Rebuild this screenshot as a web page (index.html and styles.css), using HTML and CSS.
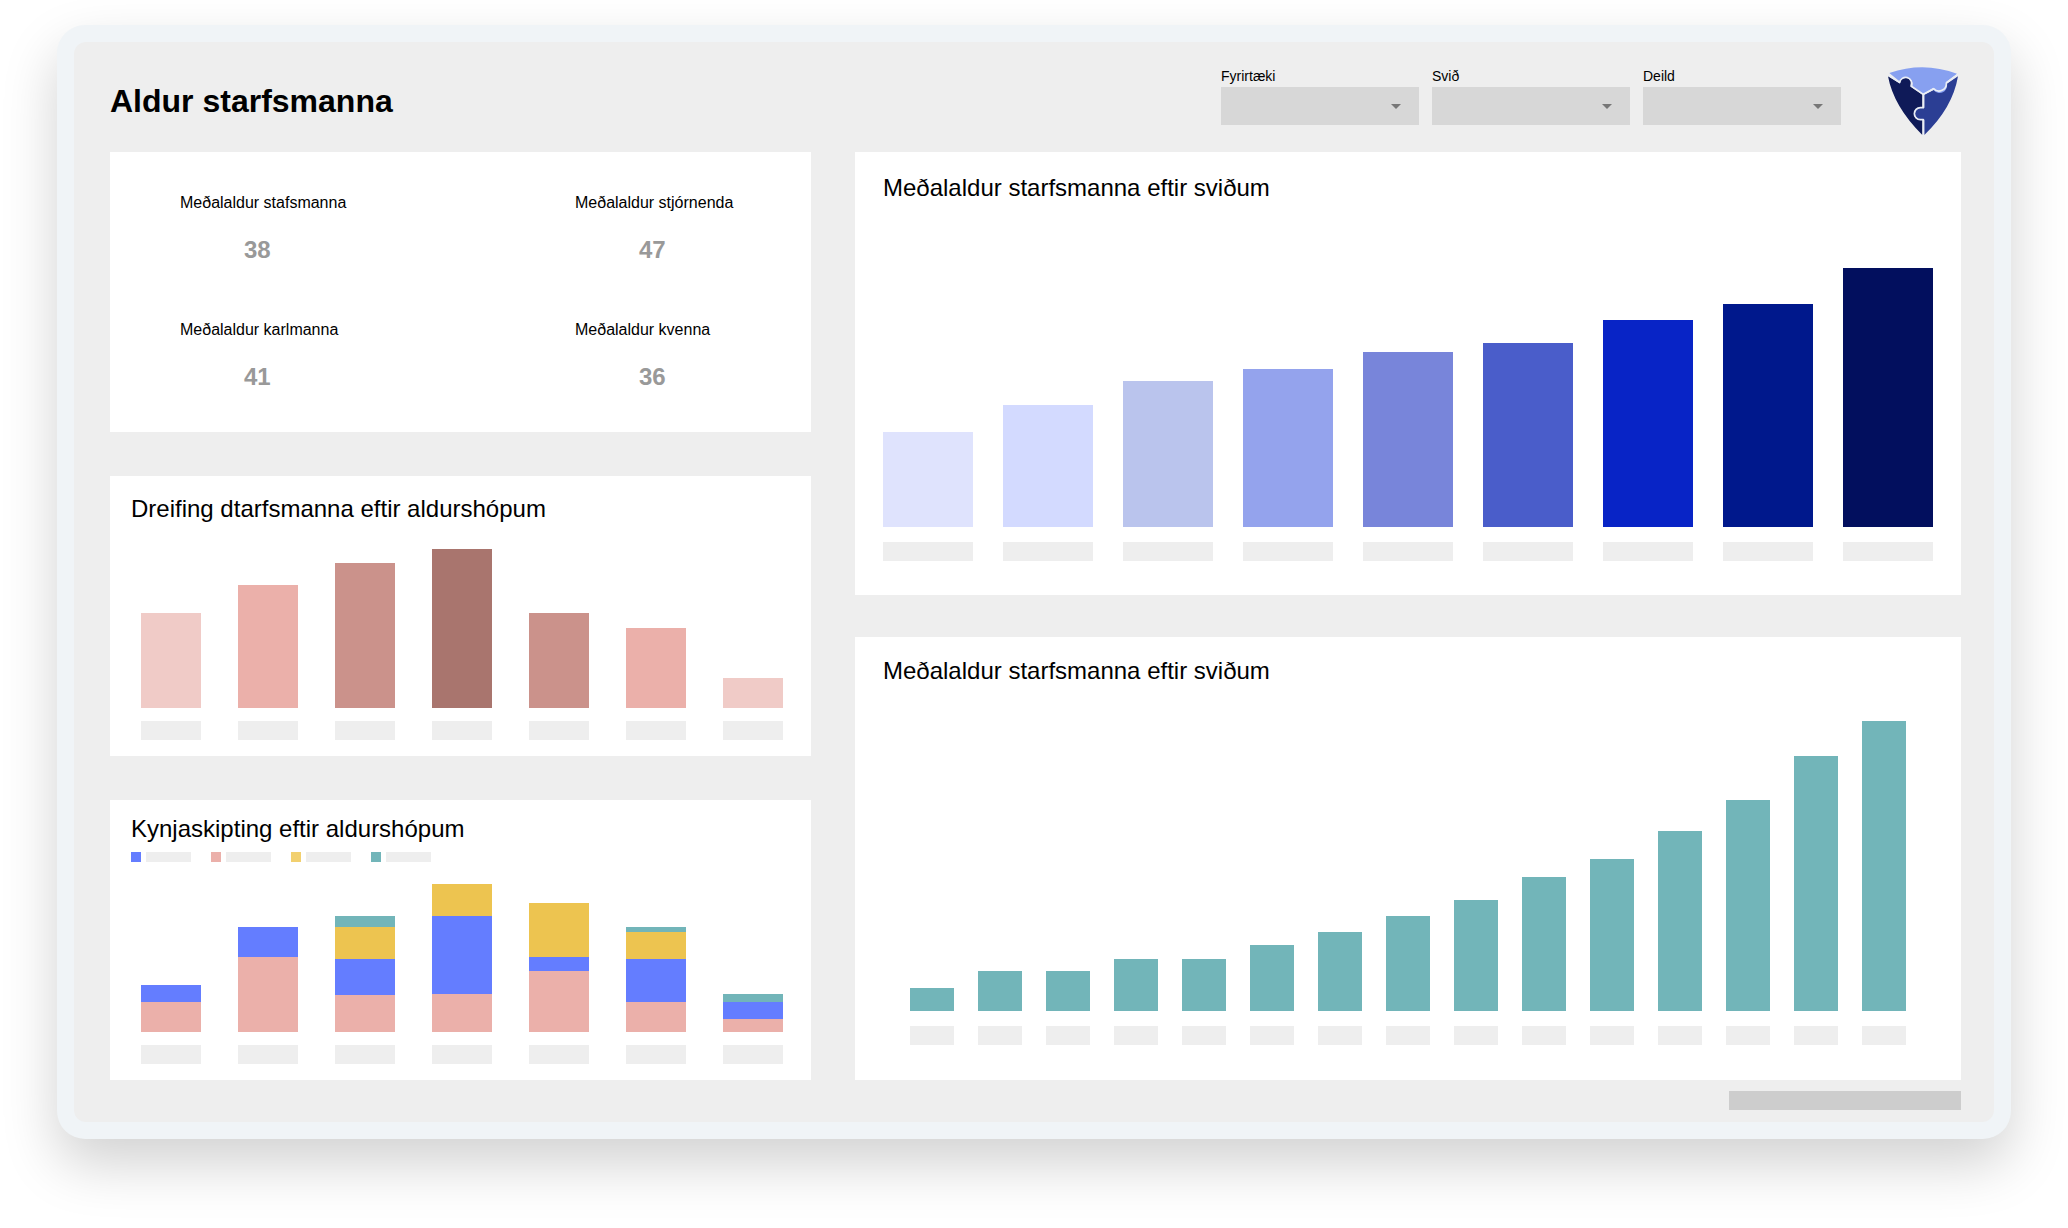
FILE: index.html
```html
<!DOCTYPE html>
<html lang="is">
<head>
<meta charset="utf-8">
<title>Aldur starfsmanna</title>
<link rel="stylesheet" href="styles.css">
</head>
<body>
<div class="frame">
  <div class="board">
    <header class="header">
      <h1 class="page-title">Aldur starfsmanna</h1>
      <div class="filters">
        <div class="filter"><div class="filter-label">Fyrirtæki</div><div class="select"><span class="caret"></span></div></div>
        <div class="filter"><div class="filter-label">Svið</div><div class="select"><span class="caret"></span></div></div>
        <div class="filter"><div class="filter-label">Deild</div><div class="select"><span class="caret"></span></div></div>
      </div>
      <svg class="logo" viewBox="30 0 228 240" width="76" height="80" aria-hidden="true">
        <path fill="#87a0f0" d="M43 39 Q145 3 246 41 L213 66 A22 22 0 1 1 174 84 L145 102 L112 80 A18 18 0 1 0 76 66 Z"/>
        <path fill="#0f1a58" d="M39 49 L74 70 A18 18 0 1 1 108 80 L142 104 L142 143 L135 143 A18 18 0 1 0 135 179 L142 179 L142 225 Q56 140 39 49 Z"/>
        <path fill="#2b3e94" d="M148 225 L148 179 L138 179 A18 18 0 1 1 138 143 L148 143 L148 104 L176 90 A22 22 0 0 0 215 71 L249 49 Q233 144 148 225 Z"/>
        <path class="logo-seam" d="M40 46 L74 68 A18 18 0 1 1 108 78 L145 103 L145 143 L136 143 A18 18 0 1 0 136 179 L145 179 L145 226 M145 103 L176 86 A22 22 0 0 0 214 69 L248 44"/>
      </svg>
    </header>
    <main class="main">
      <div class="column-left">
        <section class="card kpis">
          <div class="kpi"><div class="kpi-label">Meðalaldur stafsmanna</div><div class="kpi-value">38</div></div>
          <div class="kpi"><div class="kpi-label">Meðalaldur stjórnenda</div><div class="kpi-value">47</div></div>
          <div class="kpi"><div class="kpi-label">Meðalaldur karlmanna</div><div class="kpi-value">41</div></div>
          <div class="kpi"><div class="kpi-label">Meðalaldur kvenna</div><div class="kpi-value">36</div></div>
        </section>
        <section class="card card-dist">
          <h2 class="card-title">Dreifing dtarfsmanna eftir aldurshópum</h2>
          <div class="chart chart-small">
            <div class="col"><div class="bar rose-1" style="height:95px"></div><div class="tick"></div></div>
            <div class="col"><div class="bar rose-2" style="height:123px"></div><div class="tick"></div></div>
            <div class="col"><div class="bar rose-3" style="height:145px"></div><div class="tick"></div></div>
            <div class="col"><div class="bar rose-4" style="height:159px"></div><div class="tick"></div></div>
            <div class="col"><div class="bar rose-3" style="height:95px"></div><div class="tick"></div></div>
            <div class="col"><div class="bar rose-2" style="height:80px"></div><div class="tick"></div></div>
            <div class="col"><div class="bar rose-1" style="height:30px"></div><div class="tick"></div></div>
          </div>
        </section>
        <section class="card card-stack">
          <h2 class="card-title">Kynjaskipting eftir aldurshópum</h2>
          <div class="legend">
            <div class="legend-item"><span class="swatch blue"></span><span class="legend-text"></span></div>
            <div class="legend-item"><span class="swatch pink"></span><span class="legend-text"></span></div>
            <div class="legend-item"><span class="swatch yellow-soft"></span><span class="legend-text"></span></div>
            <div class="legend-item"><span class="swatch teal"></span><span class="legend-text"></span></div>
          </div>
          <div class="chart chart-small chart-stack">
            <div class="col"><div class="bar blue" style="height:17px"></div><div class="bar pink" style="height:30px"></div><div class="tick"></div></div>
            <div class="col"><div class="bar blue" style="height:30px"></div><div class="bar pink" style="height:75px"></div><div class="tick"></div></div>
            <div class="col"><div class="bar teal" style="height:11px"></div><div class="bar yellow" style="height:32px"></div><div class="bar blue" style="height:36px"></div><div class="bar pink" style="height:37px"></div><div class="tick"></div></div>
            <div class="col"><div class="bar yellow" style="height:32px"></div><div class="bar blue" style="height:78px"></div><div class="bar pink" style="height:38px"></div><div class="tick"></div></div>
            <div class="col"><div class="bar yellow" style="height:54px"></div><div class="bar blue" style="height:14px"></div><div class="bar pink" style="height:61px"></div><div class="tick"></div></div>
            <div class="col"><div class="bar teal" style="height:5px"></div><div class="bar yellow" style="height:27px"></div><div class="bar blue" style="height:43px"></div><div class="bar pink" style="height:30px"></div><div class="tick"></div></div>
            <div class="col"><div class="bar teal" style="height:8px"></div><div class="bar blue" style="height:17px"></div><div class="bar pink" style="height:13px"></div><div class="tick"></div></div>
          </div>
        </section>
      </div>
      <div class="column-right">
        <section class="card card-wide card-blue">
          <h2 class="card-title">Meðalaldur starfsmanna eftir sviðum</h2>
          <div class="chart chart-blue">
            <div class="col"><div class="bar" style="height:95px;background:#dfe3fd"></div><div class="tick"></div></div>
            <div class="col"><div class="bar" style="height:122px;background:#d3daff"></div><div class="tick"></div></div>
            <div class="col"><div class="bar" style="height:146px;background:#bac4ed"></div><div class="tick"></div></div>
            <div class="col"><div class="bar" style="height:158px;background:#94a3ed"></div><div class="tick"></div></div>
            <div class="col"><div class="bar" style="height:175px;background:#7885da"></div><div class="tick"></div></div>
            <div class="col"><div class="bar" style="height:184px;background:#4a5dca"></div><div class="tick"></div></div>
            <div class="col"><div class="bar" style="height:207px;background:#0824c6"></div><div class="tick"></div></div>
            <div class="col"><div class="bar" style="height:223px;background:#00188c"></div><div class="tick"></div></div>
            <div class="col"><div class="bar" style="height:259px;background:#020f5e"></div><div class="tick"></div></div>
          </div>
        </section>
        <section class="card card-wide card-teal">
          <h2 class="card-title">Meðalaldur starfsmanna eftir sviðum</h2>
          <div class="chart chart-teal">
            <div class="col"><div class="bar teal" style="height:23px"></div><div class="tick"></div></div>
            <div class="col"><div class="bar teal" style="height:40px"></div><div class="tick"></div></div>
            <div class="col"><div class="bar teal" style="height:40px"></div><div class="tick"></div></div>
            <div class="col"><div class="bar teal" style="height:52px"></div><div class="tick"></div></div>
            <div class="col"><div class="bar teal" style="height:52px"></div><div class="tick"></div></div>
            <div class="col"><div class="bar teal" style="height:66px"></div><div class="tick"></div></div>
            <div class="col"><div class="bar teal" style="height:79px"></div><div class="tick"></div></div>
            <div class="col"><div class="bar teal" style="height:95px"></div><div class="tick"></div></div>
            <div class="col"><div class="bar teal" style="height:111px"></div><div class="tick"></div></div>
            <div class="col"><div class="bar teal" style="height:134px"></div><div class="tick"></div></div>
            <div class="col"><div class="bar teal" style="height:152px"></div><div class="tick"></div></div>
            <div class="col"><div class="bar teal" style="height:180px"></div><div class="tick"></div></div>
            <div class="col"><div class="bar teal" style="height:211px"></div><div class="tick"></div></div>
            <div class="col"><div class="bar teal" style="height:255px"></div><div class="tick"></div></div>
            <div class="col"><div class="bar teal" style="height:290px"></div><div class="tick"></div></div>
          </div>
        </section>
      </div>
    </main>
    <footer class="footer"><div class="footer-bar"></div></footer>
  </div>
</div>
</body>
</html>
```

FILE: styles.css
```css
* { box-sizing: border-box; }

html, body { margin: 0; background: #ffffff; }

body {
  font-family: "Liberation Sans", Arial, sans-serif;
  color: #000;
  height: 1228px;
  overflow: hidden;
}

.frame {
  margin: 25px 57px 0;
  padding: 17px;
  height: 1114px;
  background: #f0f4f7;
  border-radius: 28px;
  box-shadow: 0 25px 55px rgba(0, 0, 0, 0.18);
}

.board {
  height: 1080px;
  padding: 0 33px 0 36px;
  background: #eeeeee;
  border-radius: 12px;
}

.header {
  display: flex;
  align-items: flex-start;
  height: 110px;
  padding-top: 18px;
}

.page-title {
  margin: 21px auto 0 0;
  font-size: 32px;
  line-height: 40px;
  font-weight: 700;
}

.filters {
  display: flex;
  gap: 13px;
  margin-top: 8px;
}

.filter { width: 198px; }

.filter-label {
  font-size: 14px;
  line-height: 16px;
  margin-bottom: 3px;
}

.select {
  display: flex;
  align-items: center;
  justify-content: flex-end;
  height: 38px;
  padding-right: 18px;
  background: #d7d7d7;
}

.caret {
  width: 0;
  height: 0;
  border-left: 5px solid transparent;
  border-right: 5px solid transparent;
  border-top: 5px solid #777777;
}

.logo { flex: none; margin-left: 44px; }

.logo-seam {
  fill: none;
  stroke: #e9edf5;
  stroke-width: 5;
  stroke-linejoin: round;
}

.main {
  display: grid;
  grid-template-columns: 701px 1106px;
  column-gap: 44px;
  height: 928px;
}

.column-left {
  display: flex;
  flex-direction: column;
  gap: 44px;
}

.column-right {
  display: flex;
  flex-direction: column;
  gap: 42px;
}

.card {
  background: #ffffff;
  height: 280px;
  padding-left: 21px;
}

.card-wide { height: 443px; padding-left: 28px; }

.card-title {
  margin: 0;
  font-size: 24px;
  line-height: 30px;
  font-weight: 400;
}

.kpis {
  display: grid;
  grid-template-columns: 395px 1fr;
  grid-auto-rows: 127px;
  padding: 41px 0 0 70px;
}

.kpi-label {
  font-size: 16px;
  line-height: 20px;
}

.kpi-value {
  margin-top: 22px;
  padding-left: 64px;
  font-size: 24px;
  line-height: 30px;
  font-weight: 700;
  color: #999999;
}

.card-dist { padding-top: 18px; }
.card-stack { padding-top: 14px; }
.card-blue { padding-top: 21px; }
.card-teal { padding-top: 19px; }

.legend {
  display: flex;
  gap: 20px;
  margin-top: 8px;
  height: 10px;
}

.legend-item {
  display: flex;
  gap: 5px;
}

.swatch { width: 10px; height: 10px; }
.legend-text { width: 45px; height: 10px; background: #eeeeee; }

.chart {
  display: flex;
  align-items: flex-end;
}

.chart-small { height: 216px; gap: 37px; margin-left: 10px; }
.chart-stack { height: 202px; }
.chart-blue { height: 358px; gap: 30px; }
.chart-teal { height: 358px; gap: 24px; margin-top: 1px; margin-left: 27px; }

.chart-small .col { width: 60px; }
.chart-blue .col { width: 90px; }
.chart-teal .col { width: 44px; }

.tick {
  height: 19px;
  margin-top: 13px;
  background: #eeeeee;
}

.chart-blue .tick,
.chart-teal .tick { margin-top: 15px; }

.rose-1 { background: #f0cbc7; }
.rose-2 { background: #ebb0aa; }
.rose-3 { background: #cb928b; }
.rose-4 { background: #a9756e; }

.blue { background: #647dff; }
.pink { background: #ebb0aa; }
.yellow { background: #edc450; }
.yellow-soft { background: #f2d06f; }
.teal { background: #72b5b9; }

.footer {
  display: flex;
  justify-content: flex-end;
  padding-top: 11px;
}

.footer-bar {
  width: 232px;
  height: 19px;
  background: #cdcdcd;
}
```
